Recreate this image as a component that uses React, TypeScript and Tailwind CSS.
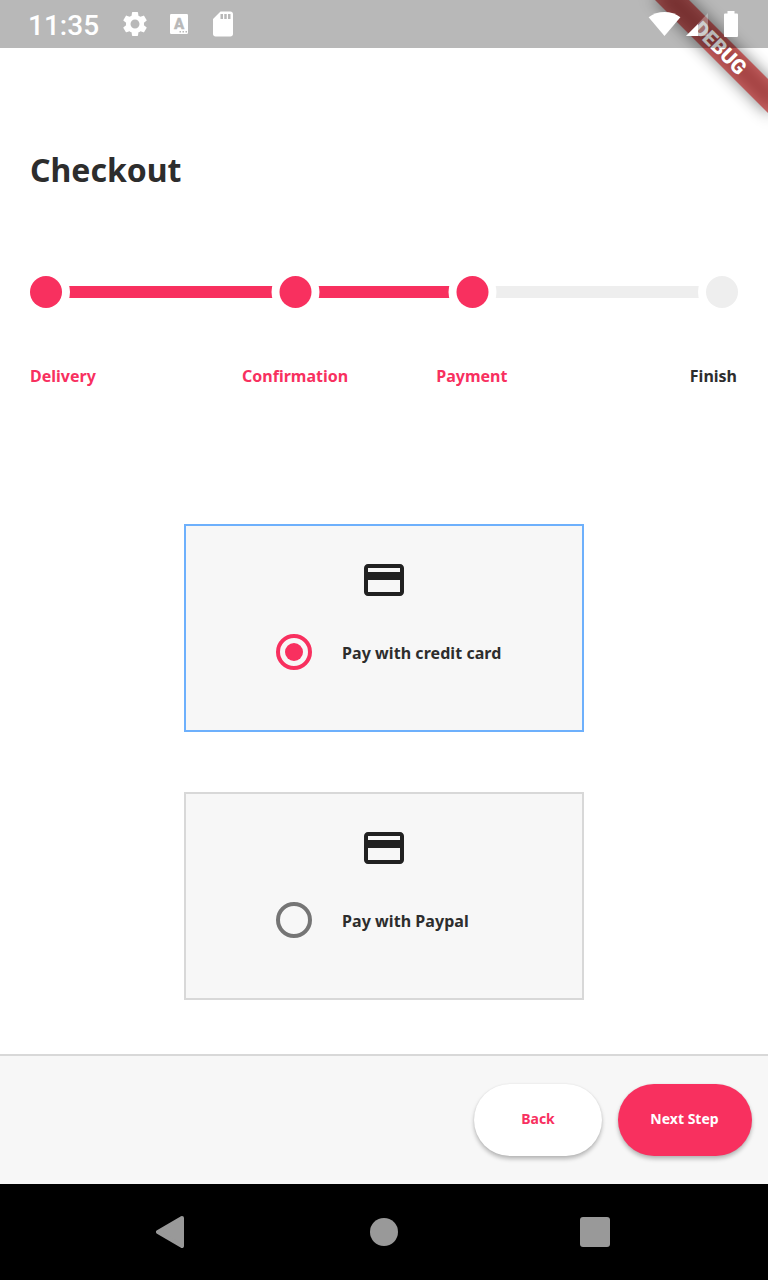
import React from "react";
import { MdSettings, MdSdCard } from "react-icons/md";

const steps = [
  { label: "Delivery", done: true, align: "text-left" },
  { label: "Confirmation", done: true, align: "text-center" },
  { label: "Payment", done: true, align: "text-center" },
  { label: "Finish", done: false, align: "text-right" },
];

function KeyboardIcon() {
  return (
    <svg className="h-5 w-[18px]" viewBox="0 0 18 20">
      <rect width="18" height="20" rx="1.2" fill="#fff" />
      <text x="9" y="14.700" textAnchor="middle" fontFamily="Roboto" fontWeight="900" fontSize="15" fill="#b8b8b8" stroke="#b8b8b8" strokeWidth="0.300">A</text>
      <path d="M9.500 17h1.500v1.500h-1.500zM12.500 17h1.500v1.500h-1.500zM15.500 17h1.500v1.500h-1.500z" fill="#b8b8b8" />
    </svg>
  );
}

function StatusIcons() {
  return (
    <svg className="h-12 w-[92px]" viewBox="648 0 92 48" fill="#fff">
      <path d="M648.6 17.3C653 13.9 658.5 12 664.5 12s11.500 1.900 15.900 5.300L664.500 36z" />
      <path d="M708 13v23h-22z" opacity=".3" />
      <path d="M698 24v12h-12z" />
      <path d="M727.500 11h7v2.500h2.200c.8 0 1.300.5 1.300 1.300v20.900c0 .8-.5 1.300-1.300 1.300h-11.400c-.8 0-1.300-.5-1.300-1.300V14.800c0-.8.5-1.300 1.300-1.300h2.200z" />
    </svg>
  );
}

function StatusBar() {
  return (
    <header className="relative z-20 flex h-12 items-center justify-between bg-black/28 pr-7 pl-7 text-white">
      <div className="flex items-center">
        <span className="w-[71px] pt-[3px] font-[Roboto,sans-serif] text-[28px] leading-none font-medium whitespace-nowrap">11:35</span>
        <MdSettings className="ml-[21px] size-[30px]" />
        <div className="ml-5 flex"><KeyboardIcon /></div>
        <MdSdCard className="ml-5 size-[30px]" />
      </div>
      <StatusIcons />
    </header>
  );
}

function DebugBanner() {
  return (
    <div className="absolute top-0 right-0 z-10 size-40 overflow-hidden">
      <div className="absolute top-9 left-8 flex h-6 w-40 rotate-45 items-center justify-center font-[Roboto,sans-serif] text-[20.4px] leading-none font-black text-white">
        <div className="absolute inset-0 bg-black/50 blur-[8px]" />
        <div className="absolute inset-0 bg-[#b71c1c]/63" />
        <span className="relative">DEBUG</span>
      </div>
    </div>
  );
}

function Stepper() {
  return (
    <section>
      <div className="-mx-2 flex h-12 items-center">
        {steps.map((s, i) => (
          <React.Fragment key={s.label}>
            {i > 0 && (
              <div className={`-mx-2 h-3 ${i === 2 ? "w-[145px]" : "flex-1"} ${s.done ? "bg-[#f8305f]" : "bg-[#eeeeee]"}`} />
            )}
            <svg className="z-1 size-12 shrink-0" viewBox={i === 1 || i === 2 ? "0.5 0 48 48" : "0 0 48 48"} overflow="visible">
              <circle cx="24" cy="24" r="24" fill="#fff" />
              <circle cx="24" cy="24" r="16" fill={s.done ? "#f8305f" : "#eeeeee"} />
            </svg>
          </React.Fragment>
        ))}
      </div>
      <div className="mt-12 grid grid-cols-4 pr-px text-base font-bold">
        {steps.map((s) => (
          <span key={s.label} className={`${s.align} ${s.done ? "text-[#f8305f]" : "text-[#2d2d2d]"}`}>{s.label}</span>
        ))}
      </div>
    </section>
  );
}

function PaymentOption({ label, selected }: { label: string; selected: boolean }) {
  return (
    <div className={`flex h-52 w-100 flex-col border-2 bg-[#f7f7f7] ${selected ? "border-[#6db0fc]" : "border-[#d8d8d8]"}`}>
      <svg className="mt-[30px] size-12 self-center" viewBox="0 0 24 24" fill="#212121">
        <path d="M20 4H4c-1.110 0-1.990.89-1.990 2L2 18c0 1.110.89 2 2 2h16c1.110 0 2-.89 2-2V6c0-1.110-.89-2-2-2zm0 14H4v-6h16v6zm0-10H4V6h16v2z" />
      </svg>
      <div className="mt-[30px] ml-[90px] flex h-9 items-center gap-[30px]">
        <div className={`flex size-9 items-center justify-center rounded-full border-4 ${selected ? "border-[#f8305f]" : "border-[#757575]"}`}>
          {selected && <div className="size-[18px] rounded-full bg-[#f8305f]" />}
        </div>
        <span className="pt-0.5 text-base font-bold tracking-[0.06px] text-[#2d2d2d]">{label}</span>
      </div>
    </div>
  );
}

export default function App() {
  return (
    <div className="relative isolate flex h-[1280px] w-[768px] flex-col overflow-hidden bg-white font-['Noto_Sans',sans-serif]">
      <StatusBar />
      <DebugBanner />
      <main className="flex flex-1 flex-col px-[30px]">
        <h1 className="mt-[98px] text-[32px] leading-12 font-bold text-[#2d2d2d]">Checkout</h1>
        <div className="mt-[74px]"><Stepper /></div>
        <div className="mt-[136px] flex flex-col items-center gap-15">
          <PaymentOption label="Pay with credit card" selected />
          <PaymentOption label="Pay with Paypal" selected={false} />
        </div>
      </main>
      <footer className="flex h-[130px] items-center justify-end gap-4 border-t-2 border-[#d8d8d8] bg-[#f7f7f7] pr-4 text-sm font-bold">
        <button className="h-18 w-32 rounded-full bg-white pb-0.5 text-[#f8305f] shadow-[0_3px_4px_rgba(0,0,0,0.26),0_0_2px_rgba(0,0,0,0.08)]">Back</button>
        <button className="h-18 w-[134px] rounded-full bg-[#f8305f] pr-px pb-0.5 text-white shadow-[0_3px_4px_rgba(0,0,0,0.26),0_0_2px_rgba(0,0,0,0.08)]">Next Step</button>
      </footer>
      <nav className="grid h-24 grid-cols-[1fr_28px_1fr] items-center bg-black pr-[158px] pl-[156px]">
        <svg className="h-8 w-7" viewBox="0 0 28 32" fill="#999">
          <path d="M26 2 2 16l24 14z" stroke="#999" strokeWidth="4" strokeLinejoin="round" />
        </svg>
        <div className="ml-px size-7 rounded-full bg-[#999]" />
        <div className="size-[30px] justify-self-end rounded-[3px] bg-[#999]" />
      </nav>
    </div>
  );
}
